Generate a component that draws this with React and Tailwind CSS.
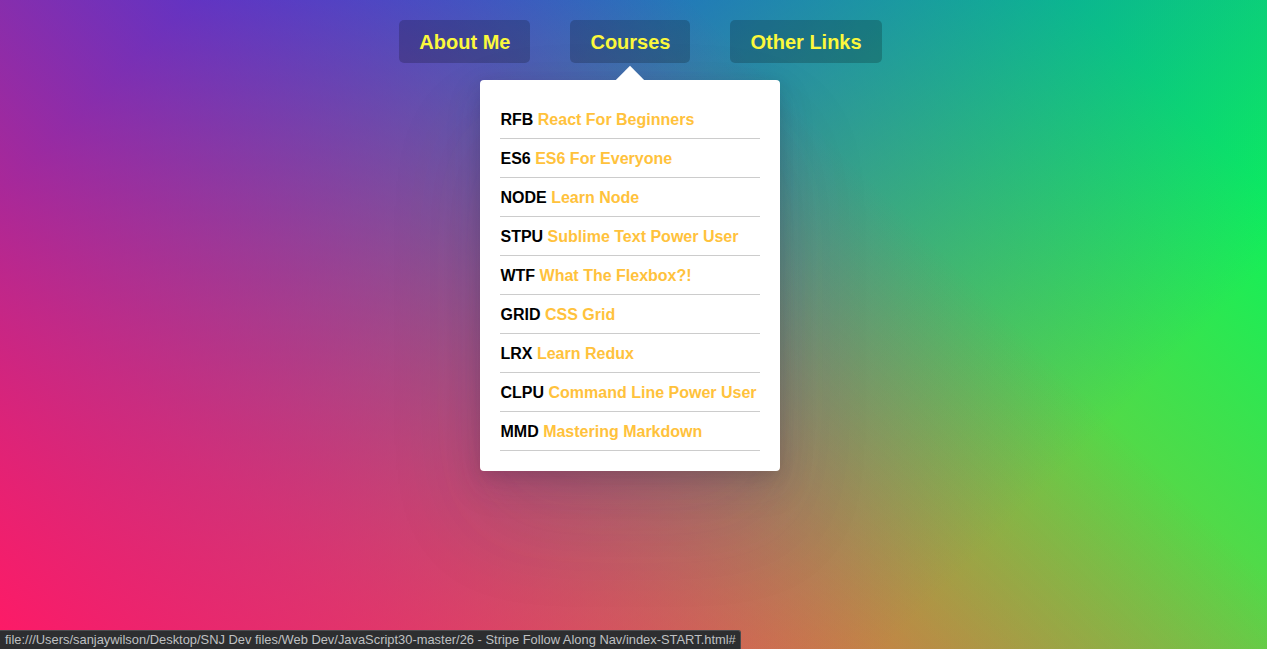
import React from 'react';

const courses = [
  { code: 'RFB', name: 'React For Beginners' },
  { code: 'ES6', name: 'ES6 For Everyone' },
  { code: 'NODE', name: 'Learn Node' },
  { code: 'STPU', name: 'Sublime Text Power User' },
  { code: 'WTF', name: 'What The Flexbox?!' },
  { code: 'GRID', name: 'CSS Grid' },
  { code: 'LRX', name: 'Learn Redux' },
  { code: 'CLPU', name: 'Command Line Power User' },
  { code: 'MMD', name: 'Mastering Markdown' },
];

const navItems = ['About Me', 'Courses', 'Other Links'];

const App = () => {
  return (
    <div className="relative w-full h-[649px] overflow-hidden font-['Liberation_Sans',Arial,sans-serif] bg-[linear-gradient(45deg,hsla(340,100%,55%,1)_0%,hsla(340,100%,55%,0)_70%),linear-gradient(135deg,hsla(225,95%,50%,1)_10%,hsla(225,95%,50%,0)_80%),linear-gradient(225deg,hsla(140,90%,50%,1)_10%,hsla(140,90%,50%,0)_80%),linear-gradient(315deg,hsla(35,95%,55%,1)_100%,hsla(35,95%,55%,0)_70%)]">
      {/* Nav */}
      <nav className="flex justify-center pl-[14px]">
        {navItems.map((item) => (
          <div key={item} className="relative m-5">
            <a
              href="#"
              className="block bg-black/20 rounded-[5px] px-5 py-[10px] text-[20px] leading-[22px] pt-[11px] font-bold text-[#fbf83c] no-underline"
            >
              {item}
            </a>

            {item === 'Courses' && (
              <div className="absolute left-1/2 top-[60px] -translate-x-1/2 w-[300px] bg-white rounded-[4px] p-5 shadow-[0_50px_100px_rgba(50,50,93,0.1),0_15px_35px_rgba(50,50,93,0.15),0_5px_15px_rgba(0,0,0,0.1)]">
                {/* Arrow */}
                <div className="absolute left-1/2 top-0 w-5 h-5 bg-white -translate-x-1/2 -translate-y-1/2 rotate-45" />
                <ul className="relative">
                  {courses.map((c) => (
                    <li key={c.code} className="pt-[11px] pb-[9px] border-b border-black/20 text-[16px] leading-[18px] font-bold whitespace-nowrap">
                      <span className="text-black">{c.code}</span>{' '}
                      <a href="#" className="text-[#ffc23c] no-underline">{c.name}</a>
                    </li>
                  ))}
                </ul>
              </div>
            )}
          </div>
        ))}
      </nav>

      {/* Browser status bar */}
      <div className="absolute left-0 bottom-0 h-[19px] pl-[5px] pr-[4px] flex items-center bg-[#2d2e30] border-t border-r border-[#4a4b4d] rounded-tr-[3px] text-[12.9px] text-[#bfc0c2] font-['Liberation_Sans',Arial,sans-serif] whitespace-nowrap">
        file:///Users/sanjaywilson/Desktop/SNJ Dev files/Web Dev/JavaScript30-master/26 - Stripe Follow Along Nav/index-START.html#
      </div>
    </div>
  );
};

export default App;
